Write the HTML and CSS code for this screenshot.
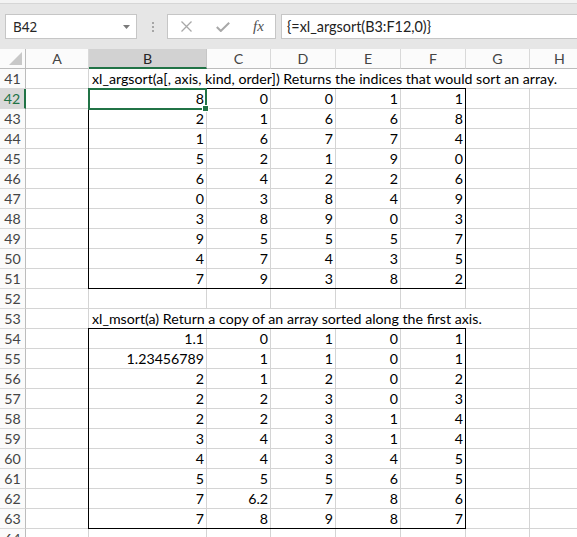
FILE: index.html
```html
<!DOCTYPE html>
<html>
<head>
<meta charset="utf-8">
<link rel="stylesheet" href="styles.css">
</head>
<body>
<div class="ribbon-edge"></div>
<div class="formula-bar">
  <div class="name-box"><span>B42</span><svg class="dd" width="7" height="4" viewBox="0 0 7 4"><path d="M0 0H7L3.5 4Z" fill="#7a7a7a"/></svg></div>
  <div class="grip"><i></i><i></i><i></i></div>
  <div class="fx-box">
    <svg class="ico-x" width="11" height="11" viewBox="0 0 11 11"><path d="M0.5 0.5L10.5 10.5M10.5 0.5L0.5 10.5" stroke="#a8a8a8" stroke-width="1.3" fill="none"/></svg>
    <svg class="ico-ok" width="14" height="10" viewBox="0 0 14 10"><path d="M0.8 5L4.8 9L13.2 0.8" stroke="#a8a8a8" stroke-width="2" fill="none"/></svg>
    <span class="fx">fx</span>
  </div>
  <div class="formula">{=xl_argsort(B3:F12,0)}</div>
</div>
<div class="sheet">
  <div class="corner"><svg width="13" height="13" viewBox="0 0 13 13"><path d="M13 0V13H0Z" fill="#c8c8c8"/></svg></div>
  <div class="ch">A</div><div class="ch sel">B</div><div class="ch">C</div><div class="ch">D</div><div class="ch">E</div><div class="ch">F</div><div class="ch">G</div><div class="ch">H</div>

  <div class="rh">41</div><div class="c"></div><div class="c t s7">xl_argsort(a[, axis, kind, order]) Returns the indices that would sort an array.</div>
  <div class="rh sel">42</div><div class="c"></div><div class="c">8</div><div class="c">0</div><div class="c">0</div><div class="c">1</div><div class="c">1</div><div class="c"></div><div class="c"></div>
  <div class="rh">43</div><div class="c"></div><div class="c">2</div><div class="c">1</div><div class="c">6</div><div class="c">6</div><div class="c">8</div><div class="c"></div><div class="c"></div>
  <div class="rh">44</div><div class="c"></div><div class="c">1</div><div class="c">6</div><div class="c">7</div><div class="c">7</div><div class="c">4</div><div class="c"></div><div class="c"></div>
  <div class="rh">45</div><div class="c"></div><div class="c">5</div><div class="c">2</div><div class="c">1</div><div class="c">9</div><div class="c">0</div><div class="c"></div><div class="c"></div>
  <div class="rh">46</div><div class="c"></div><div class="c">6</div><div class="c">4</div><div class="c">2</div><div class="c">2</div><div class="c">6</div><div class="c"></div><div class="c"></div>
  <div class="rh">47</div><div class="c"></div><div class="c">0</div><div class="c">3</div><div class="c">8</div><div class="c">4</div><div class="c">9</div><div class="c"></div><div class="c"></div>
  <div class="rh">48</div><div class="c"></div><div class="c">3</div><div class="c">8</div><div class="c">9</div><div class="c">0</div><div class="c">3</div><div class="c"></div><div class="c"></div>
  <div class="rh">49</div><div class="c"></div><div class="c">9</div><div class="c">5</div><div class="c">5</div><div class="c">5</div><div class="c">7</div><div class="c"></div><div class="c"></div>
  <div class="rh">50</div><div class="c"></div><div class="c">4</div><div class="c">7</div><div class="c">4</div><div class="c">3</div><div class="c">5</div><div class="c"></div><div class="c"></div>
  <div class="rh">51</div><div class="c"></div><div class="c">7</div><div class="c">9</div><div class="c">3</div><div class="c">8</div><div class="c">2</div><div class="c"></div><div class="c"></div>
  <div class="rh">52</div><div class="c"></div><div class="c"></div><div class="c"></div><div class="c"></div><div class="c"></div><div class="c"></div><div class="c"></div><div class="c"></div>
  <div class="rh">53</div><div class="c"></div><div class="c t s6">xl_msort(a) Return a copy of an array sorted along the first axis.</div><div class="c"></div>
  <div class="rh">54</div><div class="c"></div><div class="c">1.1</div><div class="c">0</div><div class="c">1</div><div class="c">0</div><div class="c">1</div><div class="c"></div><div class="c"></div>
  <div class="rh">55</div><div class="c"></div><div class="c">1.23456789</div><div class="c">1</div><div class="c">1</div><div class="c">0</div><div class="c">1</div><div class="c"></div><div class="c"></div>
  <div class="rh">56</div><div class="c"></div><div class="c">2</div><div class="c">1</div><div class="c">2</div><div class="c">0</div><div class="c">2</div><div class="c"></div><div class="c"></div>
  <div class="rh">57</div><div class="c"></div><div class="c">2</div><div class="c">2</div><div class="c">3</div><div class="c">0</div><div class="c">3</div><div class="c"></div><div class="c"></div>
  <div class="rh">58</div><div class="c"></div><div class="c">2</div><div class="c">2</div><div class="c">3</div><div class="c">1</div><div class="c">4</div><div class="c"></div><div class="c"></div>
  <div class="rh">59</div><div class="c"></div><div class="c">3</div><div class="c">4</div><div class="c">3</div><div class="c">1</div><div class="c">4</div><div class="c"></div><div class="c"></div>
  <div class="rh">60</div><div class="c"></div><div class="c">4</div><div class="c">4</div><div class="c">3</div><div class="c">4</div><div class="c">5</div><div class="c"></div><div class="c"></div>
  <div class="rh">61</div><div class="c"></div><div class="c">5</div><div class="c">5</div><div class="c">5</div><div class="c">6</div><div class="c">5</div><div class="c"></div><div class="c"></div>
  <div class="rh">62</div><div class="c"></div><div class="c">7</div><div class="c">6.2</div><div class="c">7</div><div class="c">8</div><div class="c">6</div><div class="c"></div><div class="c"></div>
  <div class="rh">63</div><div class="c"></div><div class="c">7</div><div class="c">8</div><div class="c">9</div><div class="c">8</div><div class="c">7</div><div class="c"></div><div class="c"></div>
  <div class="rh last">64</div><div class="c"></div><div class="c"></div><div class="c"></div><div class="c"></div><div class="c"></div><div class="c"></div><div class="c"></div><div class="c"></div>

  <div class="range r1"></div>
  <div class="range r2"></div>
  <div class="selection"><span class="handle"></span></div>
</div>
</body>
</html>
```
FILE: styles.css
```css
html, body {
  margin: 0;
  padding: 0;
}
body {
  width: 577px;
  height: 537px;
  overflow: hidden;
  background: #ffffff;
  font-family: Lato, "Liberation Sans", sans-serif;
}
.ribbon-edge {
  height: 3px;
  background: #f3f3f3;
  border-bottom: 1px solid #d6d6d6;
}
.formula-bar {
  display: flex;
  align-items: center;
  height: 45px;
  background: #e6e6e6;
  padding-left: 5px;
}
.name-box {
  width: 132px;
  height: 25px;
  box-sizing: border-box;
  border: 1px solid #c6c6c6;
  background: #fff;
  display: flex;
  align-items: center;
  justify-content: space-between;
  padding: 0 6px 0 7px;
  font-family: "Noto Sans", sans-serif;
  font-size: 13.5px;
  color: #262626;
}
.grip {
  margin-left: 15px;
  display: flex;
  flex-direction: column;
  gap: 2px;
}
.grip i {
  display: block;
  width: 2px;
  height: 2px;
  background: #a6a6a6;
}
.fx-box {
  margin-left: 13px;
  width: 109px;
  height: 25px;
  box-sizing: border-box;
  border: 1px solid #c6c6c6;
  background: #fff;
  display: flex;
  align-items: center;
  padding-left: 13px;
}
.ico-ok {
  margin-left: 24px;
  margin-top: 1px;
}
.fx {
  margin-left: 23px;
  font-family: "Liberation Serif", serif;
  font-style: italic;
  font-size: 15px;
  color: #505050;
}
.formula {
  margin-left: 5px;
  margin-right: -3px;
  flex: 1;
  height: 25px;
  box-sizing: border-box;
  border: 1px solid #c6c6c6;
  background: #fff;
  display: flex;
  align-items: center;
  padding-left: 5px;
  font-size: 14.4px;
  color: #222;
}
.sheet {
  position: relative;
  display: grid;
  grid-template-columns: 26px 63px 118px 64px 65px 65px 65px 64px 60px;
  grid-template-rows: repeat(25, 20px);
  font-size: 14.2px;
  color: #000;
}
.sheet > div {
  box-sizing: border-box;
}
.corner {
  background: #fbfbfb;
  border-right: 1px solid #bcbcbc;
  border-bottom: 1px solid #bcbcbc;
  display: flex;
  align-items: flex-end;
  justify-content: flex-end;
  padding: 0 3px 3px 0;
}
.corner svg {
  display: block;
}
.ch {
  background: #fbfbfb;
  border-right: 1px solid #d9d9d9;
  border-bottom: 1px solid #bcbcbc;
  text-align: center;
  line-height: 20px;
  color: #444;
}
.ch.sel {
  background: #d2d2d2;
  border-bottom: 2px solid #217346;
  border-right-color: #c6c6c6;
  color: #262626;
}
.rh {
  background: #fbfbfb;
  border-right: 1px solid #bcbcbc;
  border-bottom: 1px solid #d9d9d9;
  text-align: center;
  line-height: 19px;
  color: #444;
}
.rh.sel {
  background: #d9d9d9;
  border-right: 2px solid #217346;
  color: #217346;
}
.c {
  border-right: 1px solid #d4d4d4;
  border-bottom: 1px solid #d4d4d4;
  display: flex;
  align-items: flex-end;
  justify-content: flex-end;
  padding-right: 2px;
  line-height: 18px;
  white-space: nowrap;
}
.c.t {
  justify-content: flex-start;
  padding-left: 3px;
}
.s7 {
  grid-column: span 7;
}
.s6 {
  grid-column: span 6;
}
.range {
  position: absolute;
  top: -1px;
  left: -1px;
  right: 0;
  bottom: 0;
  border: 1px solid #000;
  pointer-events: none;
}
.r1 {
  grid-row: 3 / 13;
  grid-column: 3 / 8;
}
.r2 {
  grid-row: 15 / 25;
  grid-column: 3 / 8;
}
.selection {
  position: absolute;
  grid-row: 3 / 4;
  grid-column: 3 / 4;
  top: -1px;
  left: -1px;
  right: 0;
  bottom: -1px;
  border: 2px solid #217346;
  z-index: 2;
}
.handle {
  position: absolute;
  right: -4px;
  bottom: -4px;
  width: 5px;
  height: 5px;
  background: #217346;
  border: 1px solid #fff;
}
```
